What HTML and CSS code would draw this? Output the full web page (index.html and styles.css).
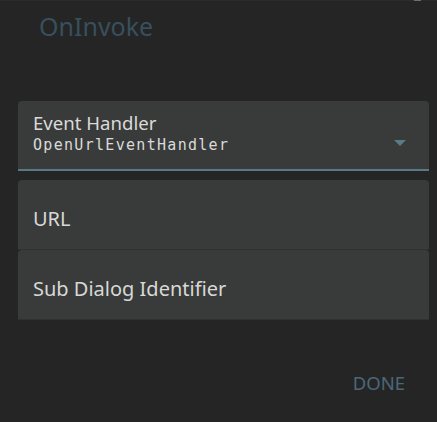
FILE: index.html
```html
<!DOCTYPE html>
<html lang="en">
<head>
<meta charset="utf-8">
<title>OnInvoke</title>
<link rel="stylesheet" href="styles.css">
</head>
<body>
<div class="dialog">
  <span class="scroll-mark"></span>
  <h1 class="title">OnInvoke</h1>
  <div class="content">
    <div class="field select">
      <div class="field-body">
        <div class="label">Event Handler</div>
        <div class="value">OpenUrlEventHandler</div>
      </div>
      <svg class="arrow" width="12" height="6" viewBox="0 0 12 6"><path d="M0 0H12L6 6Z" fill="#5c7989"/></svg>
    </div>
    <div class="field input">
      <div class="placeholder">URL</div>
    </div>
    <div class="field input">
      <div class="placeholder">Sub Dialog Identifier</div>
    </div>
  </div>
  <div class="actions">
    <button class="btn">DONE</button>
  </div>
</div>
</body>
</html>
```
FILE: styles.css
```css
html, body {
  margin: 0;
  padding: 0;
  background: #252525;
}
body {
  width: 437px;
  height: 422px;
  overflow: hidden;
  font-family: "Noto Sans", "Open Sans", sans-serif;
}
.dialog {
  position: relative;
  height: 421px;
  border-top: 1px solid #2c2c2c;
  padding: 0 8px 0 18px;
}
.scroll-mark {
  position: absolute;
  top: -1px;
  left: 414px;
  width: 7px;
  height: 1px;
  background: #6e6e6e;
}
.title {
  margin: 8px 0 0 21px;
  font-size: 25px;
  font-weight: 400;
  line-height: 34px;
  color: #38505c;
}
.content {
  margin-top: 58px;
  height: 219px;
  overflow: hidden;
  display: flex;
  flex-direction: column;
}
.field {
  flex: none;
  background: #393b3a;
  border-radius: 4px 4px 0 0;
}
.select {
  display: flex;
  align-items: flex-start;
  padding: 11px 23px 13px 15px;
  border-bottom: 2px solid #5b7888;
  margin-bottom: 9px;
}
.field-body {
  flex: 1;
}
.label {
  font-size: 18.6px;
  line-height: 22px;
  color: #dadada;
}
.value {
  font-family: "DejaVu Sans Mono", monospace;
  font-size: 15px;
  line-height: 22px;
  letter-spacing: 1.3px;
  color: #dadada;
}
.arrow {
  margin-top: 28px;
}
.input {
  padding: 27px 15px 18px;
  border-bottom: 1px solid #2b3236;
}
.placeholder {
  font-size: 20px;
  line-height: 24px;
  color: #d8d8d8;
}
.actions {
  display: flex;
  justify-content: flex-end;
  margin-top: 51px;
  padding-right: 24px;
}
.btn {
  background: none;
  border: 0;
  padding: 0;
  font-family: "Noto Sans", "Open Sans", sans-serif;
  font-size: 18.5px;
  line-height: 24px;
  color: #4a6878;
}
```
